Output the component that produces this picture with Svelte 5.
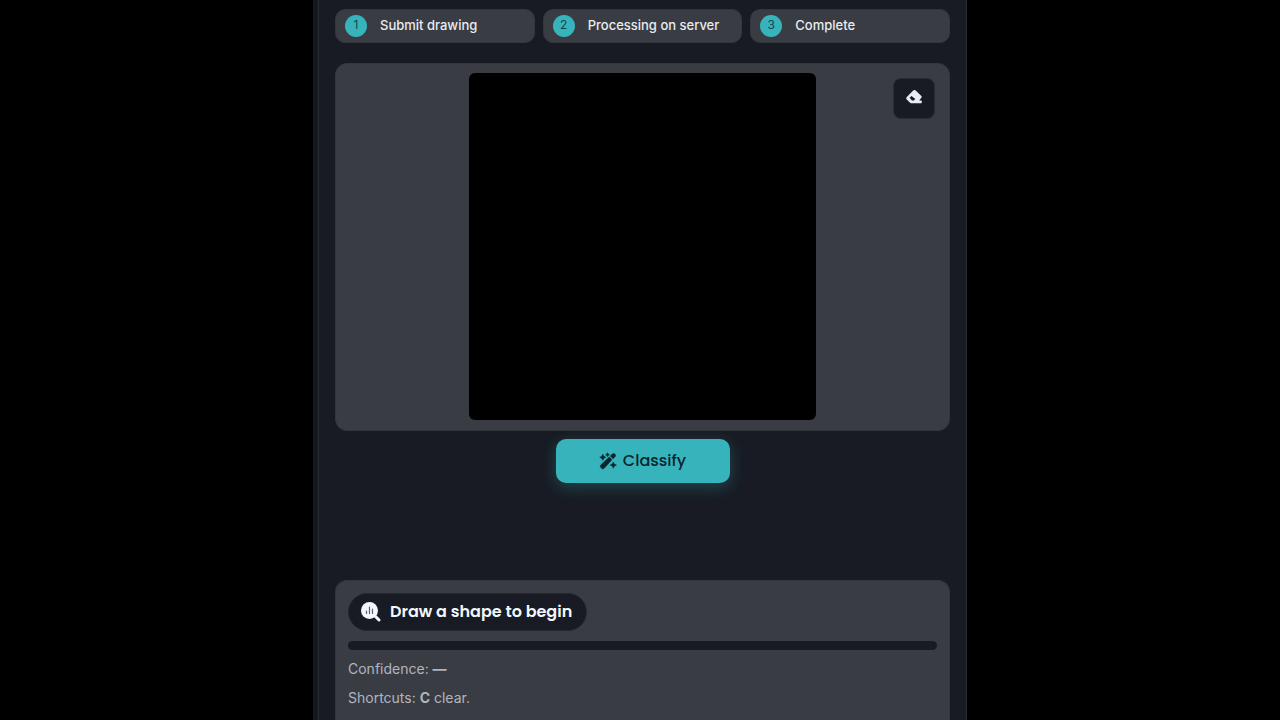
<script>
  const steps = ['Submit drawing', 'Processing on server', 'Complete'];
  let canvas;
  let drawing = false;
  let confidence = '—';

  function clear() {
    canvas.getContext('2d').clearRect(0, 0, canvas.width, canvas.height);
  }

  function point(event) {
    const box = canvas.getBoundingClientRect();
    return [
      ((event.clientX - box.left) * canvas.width) / box.width,
      ((event.clientY - box.top) * canvas.height) / box.height
    ];
  }

  function start(event) {
    drawing = true;
    const ctx = canvas.getContext('2d');
    ctx.strokeStyle = '#fff';
    ctx.lineWidth = 14;
    ctx.lineCap = 'round';
    ctx.beginPath();
    ctx.moveTo(...point(event));
  }

  function move(event) {
    if (!drawing) return;
    const ctx = canvas.getContext('2d');
    ctx.lineTo(...point(event));
    ctx.stroke();
  }

  function onKey(event) {
    if (event.key.toLowerCase() === 'c') clear();
  }
</script>

<svelte:window on:keydown={onKey} on:pointerup={() => (drawing = false)} />

<div class="page">
  <main class="panel">
    <ol class="steps">
      {#each steps as step, i}
        <li class="step"><span class="num">{i + 1}</span><span>{step}</span></li>
      {/each}
    </ol>

    <section class="board">
      <canvas
        bind:this={canvas}
        width="347"
        height="347"
        aria-label="Drawing area"
        on:pointerdown={start}
        on:pointermove={move}
      ></canvas>
      <button class="erase" type="button" aria-label="Clear drawing" on:click={clear}>
        <svg viewBox="0 0 16 14" width="16" height="14" aria-hidden="true">
          <path
            fill="currentColor"
            fill-rule="evenodd"
            d="M7.200.6a1.800 1.800 0 0 1 2.500 0l5.400 5.100a1.700 1.700 0 0 1 0 2.400L13.200 10.400H15a.8.8 0 0 1 .8.8v1.200a.8.8 0 0 1-.8.8H5.200a2 2 0 0 1-1.400-.6L.8 9.500a1.800 1.800 0 0 1 0-2.500zM5.500 5.900 3.600 7.800l2.400 2.600h1.800l1.500-1.400z"
          />
        </svg>
      </button>
    </section>

    <button class="classify" type="button">
      <svg viewBox="0 0 18 18" width="18" height="18" aria-hidden="true">
        <g fill="currentColor" stroke="currentColor" stroke-width=".5" stroke-linejoin="round">
          <path d="M10.200 4.900 13 7.700 5.200 16.300a1.900 1.900 0 0 1-2.700 0l-.7-.7a1.900 1.900 0 0 1 0-2.700z" />
          <path d="m11.300 4 1.900-1.900a2 2 0 0 1 2.800 0 2 2 0 0 1 0 2.800l-2.100 1.800z" />
          <path d="m3.800 2.200 1 2.100 2.100 1-2.100 1-1 2.100-1-2.100-2.100-1 2.100-1z" />
          <path d="m8.500.7.7 1.300 1.300.7-1.300.7-.7 1.300-.7-1.300-1.300-.7 1.300-.7z" />
          <path d="m14.300 9.900 1 2.200 2.200 1-2.200 1-1 2.200-1-2.200-2.200-1 2.200-1z" />
        </g>
      </svg>
      <span>Classify</span>
    </button>

    <section class="result">
      <h2 class="badge">
        <svg viewBox="0 0 20 20" width="20" height="20" aria-hidden="true">
          <path d="m13 13 5 5" stroke="currentColor" stroke-width="3" stroke-linecap="round" />
          <circle cx="8.500" cy="8.500" r="8.500" fill="currentColor" />
          <path d="M5.500 9v2.500M8.500 5v6.500M11.500 7v4.500" stroke="#56656d" stroke-width="1.200" stroke-linecap="round" />
        </svg>
        <span>Draw a shape to begin</span>
      </h2>
      <div class="meter" role="progressbar" aria-label="Confidence" aria-valuemin="0" aria-valuemax="100"></div>
      <p>Confidence: <b>{confidence}</b></p>
      <p>Shortcuts: <b>C</b> clear.</p>
    </section>
  </main>
</div>

<style>
  :global(body) {
    background: #000;
  }
  .page {
    box-sizing: border-box;
    max-width: 654px;
    min-height: 100vh;
    margin: 0 auto;
    padding-left: 5px;
    background: #14181f;
    font-family: Inter, sans-serif;
    color: #e8ecf1;
  }
  .panel {
    box-sizing: border-box;
    min-height: 100vh;
    display: flex;
    flex-direction: column;
    padding: 9px 16px 0;
    background: #181b23;
    border: solid #292d34;
    border-width: 0 1px;
  }
  .steps {
    display: grid;
    grid-template-columns: repeat(3, 1fr);
    gap: 8px;
    margin: 0 0 20px;
    padding: 0;
    list-style: none;
  }
  .step {
    display: flex;
    align-items: center;
    gap: 13px;
    padding: 5px 9px;
    border: 1px solid #33363d;
    border-radius: 10px;
    background: #3a3c43;
    font-size: 13px;
    font-weight: 500;
    line-height: 20px;
  }
  .step span {
    padding-bottom: 2px;
  }
  .step .num {
    width: 22px;
    border-radius: 50%;
    background: #37b4bb;
    color: #12474f;
    font-size: 12px;
    font-weight: 400;
    text-align: center;
  }
  .board {
    position: relative;
    display: flex;
    justify-content: center;
    padding: 9px 9px 10px;
    border: 1px solid #33363d;
    border-radius: 12px;
    background: #3a3c43;
  }
  canvas {
    display: block;
    width: 100%;
    max-width: 347px;
    aspect-ratio: 1;
    border-radius: 6px;
    background: #000;
    touch-action: none;
  }
  .erase {
    position: absolute;
    top: 14px;
    right: 14px;
    display: flex;
    align-items: center;
    justify-content: center;
    width: 42px;
    height: 41px;
    padding: 0 0 3px;
    border: 1px solid #282b31;
    border-radius: 8px;
    background: #181b23;
    color: #e8ecf1;
  }
  .classify {
    align-self: center;
    display: flex;
    align-items: center;
    justify-content: center;
    gap: 6px;
    min-width: 174px;
    height: 44px;
    margin: 8px 0 97px;
    padding: 0 16px;
    border: 0;
    border-radius: 10px;
    background: #37b4bb;
    box-shadow: 0 4px 16px rgba(55, 180, 187, 0.3);
    color: #0b252d;
    font: 500 16px/24px Poppins, Inter, sans-serif;
  }
  .result {
    flex: 1;
    padding: 12px;
    border: 1px solid #33363d;
    border-bottom: 0;
    border-radius: 12px 12px 0 0;
    background: #3a3c43;
  }
  .badge {
    display: flex;
    align-items: center;
    gap: 9px;
    width: fit-content;
    margin: 0 0 10px;
    padding: 6px 14px 6px 12px;
    border: 1px solid #24272e;
    border-radius: 20px;
    background: #181b23;
    color: #f3f7fb;
    font: 600 16px/24px Poppins, Inter, sans-serif;
  }
  .meter {
    height: 9px;
    margin-bottom: 9px;
    border-radius: 5px;
    background: #181b23;
  }
  p {
    margin: 0 0 9px;
    color: #b0b5be;
    font-size: 14px;
    line-height: 20px;
  }
</style>
